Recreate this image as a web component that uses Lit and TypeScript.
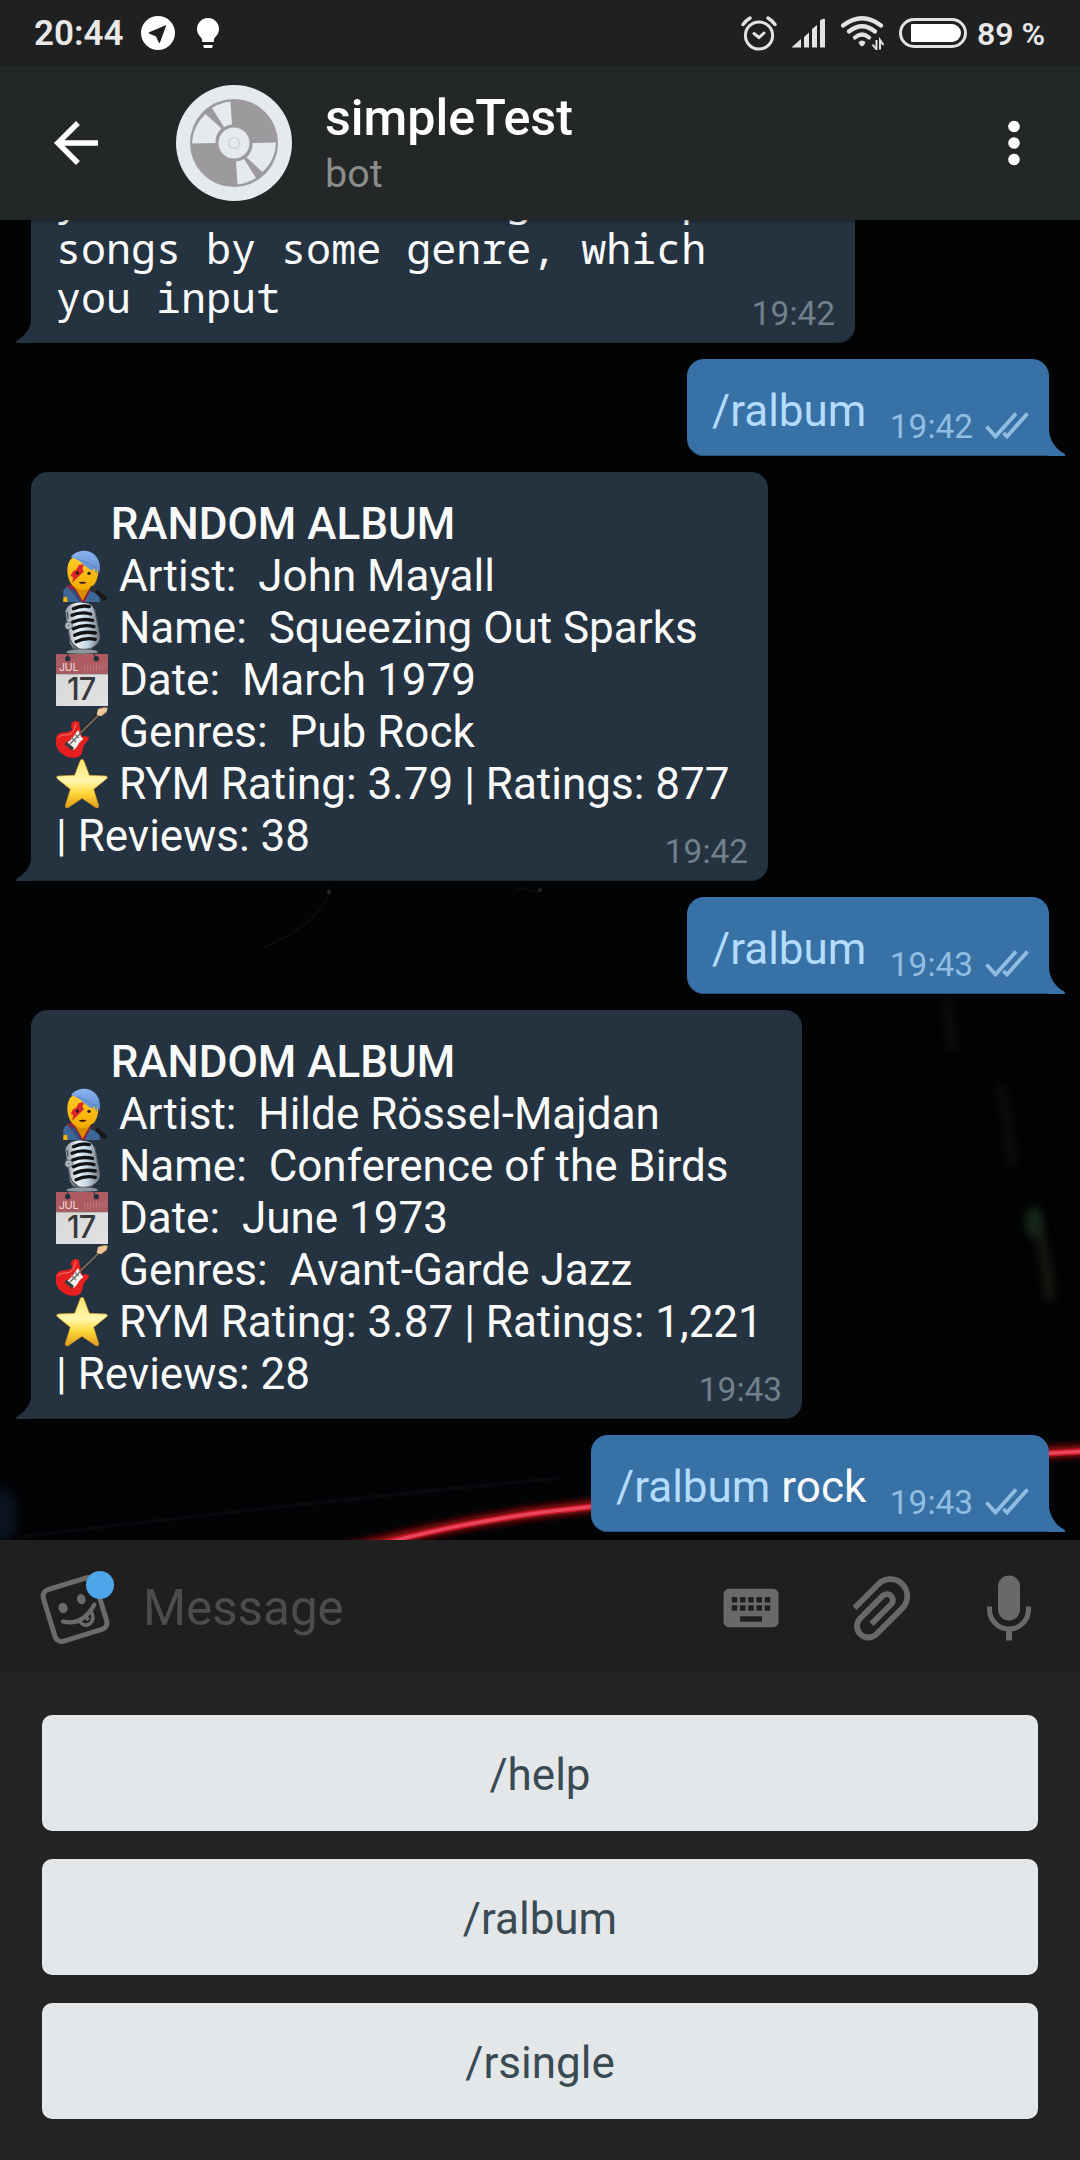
import { LitElement, html, css, svg, nothing } from "lit";
import { customElement, property } from "lit/decorators.js";

type Line = { icon?: string; text: string; bold?: boolean };
type Message = {
  out?: boolean;
  mono?: boolean;
  width: number;
  time: string;
  lines?: Line[];
  command?: string;
  rest?: string;
};

const album = (artist: string, name: string, date: string, genres: string, rating: string, reviews: string): Line[] => [
  { text: "     RANDOM ALBUM", bold: true },
  { icon: "singer", text: ` Artist:  ${artist}` },
  { icon: "mic", text: ` Name:  ${name}` },
  { icon: "calendar", text: ` Date:  ${date}` },
  { icon: "guitar", text: ` Genres:  ${genres}` },
  { icon: "star", text: ` RYM Rating: ${rating}` },
  { text: `| Reviews: ${reviews}` },
];

const MESSAGES: Message[] = [
  {
    mono: true,
    width: 824,
    time: "19:42",
    lines: [
      { text: "y" + " ".repeat(17) + "g" + " ".repeat(6) + "p" },
      { text: "songs by some genre, which" },
      { text: "you input" },
    ],
  },
  { out: true, width: 362, time: "19:42", command: "/ralbum" },
  {
    width: 737,
    time: "19:42",
    lines: album("John Mayall", "Squeezing Out Sparks", "March 1979", "Pub Rock", "3.79 | Ratings: 877", "38"),
  },
  { out: true, width: 362, time: "19:43", command: "/ralbum" },
  {
    width: 771,
    time: "19:43",
    lines: album("Hilde Rössel-Majdan", "Conference of the Birds", "June 1973", "Avant-Garde Jazz", "3.87 | Ratings: 1,221", "28"),
  },
  { out: true, width: 458, time: "19:43", command: "/ralbum", rest: " rock" },
];

const EMOJI: Record<string, unknown> = {
  singer: svg`
    <defs>
      <linearGradient id="skin" x1="0" y1="0" x2="0" y2="1"><stop offset="0" stop-color="#ffcf2a"/><stop offset="1" stop-color="#f3aa00"/></linearGradient>
      <linearGradient id="hair" x1="0" y1="0" x2="0" y2="1"><stop offset="0" stop-color="#8bb4ee"/><stop offset="1" stop-color="#5b86cc"/></linearGradient>
    </defs>
    <path d="M22 156 V124 C28 108 42 104 54 104 H104 C120 108 130 120 132 156 Z" fill="#3d6799"/>
    <path d="M22 142 L33 140 L35 156 H22 Z" fill="#f4b400"/>
    <path d="M32 108 L56 100 L106 104 L100 128 L86 156 H72 Z" fill="#8f2438"/>
    <path d="M40 112 L58 122 L76 156 H68 Z" fill="#2d5181"/>
    <path d="M56 112 L102 112 L80 152 Z" fill="#d98c00"/>
    <path d="M34 62 C34 24 56 14 82 14 C112 14 127 32 127 62 C127 98 106 120 81 120 C56 120 34 98 34 62 Z" fill="url(#skin)"/>
    <path d="M68 46 L84 42 L79 56 L84 64 L48 98 L52 82 L44 78 L51 64 L60 60 Z" fill="#d9252c"/>
    <path d="M45 21 C58 2 94 -6 116 14 C132 30 134 48 130 70 L125 56 L121 72 L114 54 L109 62 C98 56 84 46 74 36 C66 29 54 25 45 21 Z" fill="url(#hair)"/>
    <path d="M62 26 C84 34 104 42 121 55" stroke="#4c78c2" stroke-width="2" fill="none"/>
    <circle cx="64" cy="69" r="5" fill="#2c1a14"/><circle cx="99" cy="70" r="5" fill="#2c1a14"/>
    <path d="M68 97 C74 95 86 95 91 97 C86 103 74 103 68 97 Z" fill="#3a1712"/>
    <path d="M112 124 L120 116 L154 143 L151 151 L143 152 Z" fill="#17181a"/>
    <circle cx="112" cy="117" r="10" fill="#303134"/>`,
  mic: svg`
    <defs>
      <linearGradient id="steel" x1="0" y1="0" x2="1" y2="0"><stop offset="0" stop-color="#8c9298"/><stop offset=".35" stop-color="#eef3f7"/><stop offset=".65" stop-color="#bfd3e2"/><stop offset="1" stop-color="#6d7277"/></linearGradient>
    </defs>
    <path d="M36 146 Q80 138 122 146 L126 152 Q80 158 31 153 Z" fill="#8e979c"/>
    <path d="M40 120 L50 140 H108 L122 118 Z" fill="#6c7378"/>
    <path d="M28 28 C34 4 64 0 80 2 C104 2 114 14 118 34 L132 104 C132 128 106 140 84 140 C58 140 42 130 40 112 Z" fill="url(#steel)"/>
    <path d="M52 20 Q78 8 100 14 M48 40 Q74 28 104 36 M50 60 Q78 48 110 55 M52 80 Q82 66 114 74 M56 100 Q84 86 118 93 M60 119 Q88 106 118 112" stroke="#111315" stroke-width="10" stroke-linecap="round" fill="none"/>
    <path d="M34 30 L36 50 M34 68 L42 112 Q48 130 66 138" stroke="#4c5257" stroke-width="4" fill="none"/>
    <circle cx="38" cy="71" r="11" fill="#b9c3ca" stroke="#5d666c" stroke-width="3"/>
    <circle cx="38" cy="71" r="4" fill="#7c868c"/>
    <path d="M116 22 L131 100" stroke="#5b6267" stroke-width="4" stroke-dasharray="9 9"/>`,
  calendar: svg`
    <defs><linearGradient id="page" x1="0" y1="0" x2="1" y2="1"><stop offset="0" stop-color="#d6d6d6"/><stop offset="1" stop-color="#e2e2e2"/></linearGradient></defs>
    <rect width="156" height="156" fill="url(#page)"/>
    <rect width="156" height="60" fill="#ad5b60"/>
    <rect y="58" width="156" height="3" fill="#8e6c70"/>
    <circle cx="35" cy="14" r="8" fill="#22303d"/><circle cx="121" cy="14" r="8" fill="#22303d"/>
    <path d="M35 0 V10 M113 0 L119 10" stroke="#22303d" stroke-width="3"/>
    <path d="M86 34 V50 M95 30 V50 M104 34 V50 M113 30 V50 M122 28 V50 M131 32 V50 M140 28 V46 M148 24 V44" stroke="#c98287" stroke-width="3" stroke-dasharray="4 2"/>
    <text x="8" y="52" font-family="Inter, sans-serif" font-size="33" fill="#ecd8da" textLength="60">JUL</text>
    <text x="33" y="139" font-family="Inter, sans-serif" font-size="92" font-weight="500" fill="#37393b" textLength="88">17</text>`,
  guitar: svg`
    <path d="M60 94 L134 22" stroke="#24221f" stroke-width="13"/>
    <path d="M60 94 L134 22" stroke="#5d5853" stroke-width="7"/>
    <path d="M64 88 L132 22" stroke="#8d867d" stroke-width="2"/>
    <path d="M122 26 L126 9 L148 3 L155 6 L152 17 L134 31 Z" fill="#edc79a"/>
    <path d="M128 8 L151 4 M137 30 L153 17" stroke="#a47c52" stroke-width="2.500"/>
    <path d="M47 66 C41 54 50 43 62 45 C73 47 69 58 72 67 C75 77 72 84 80 92 C88 90 92 92 99 92 C97 108 86 110 82 122 C78 136 80 146 66 153 C48 160 28 152 14 140 C-3 126 -6 96 6 85 C18 76 32 82 41 76 C48 72 50 72 47 66 Z" fill="#e71f1f"/>
    <path d="M6 96 C10 87 24 88 40 85 C54 81 56 64 60 52" stroke="#ff7d78" stroke-width="3" fill="none"/>
    <path d="M66 72 C74 84 72 92 80 96 C84 99 80 102 76 104 C68 108 66 124 52 132 L30 114 C40 104 50 98 56 86 Z" fill="#efefed"/>
    <path d="M46 94 L60 108 M56 84 L68 96" stroke="#8b8b8b" stroke-width="5"/>
    <path d="M30 106 L54 126 L48 134 L26 116 Z" fill="#3c3c3e"/>
    <path d="M42 114 L74 82" stroke="#6f6963" stroke-width="4"/>`,
  star: svg`
    <defs>
      <linearGradient id="gold" x1="0" y1="0" x2="0" y2="1"><stop offset="0" stop-color="#ffe36a"/><stop offset=".45" stop-color="#fff7ae"/><stop offset=".7" stop-color="#ffd83a"/><stop offset="1" stop-color="#e29a1a"/></linearGradient>
    </defs>
    <path d="M73 7 Q78 0 83 7 L100 52 L150 54 Q158 57 152 62 L113 94 L128 143 Q128 152 120 149 L78 121 L36 149 Q28 152 28 143 L43 94 L4 62 Q-2 57 6 54 L56 52 Z" fill="url(#gold)" stroke="#dc9d26" stroke-width="2"/>`,
};

@customElement("emoji-icon")
class EmojiIcon extends LitElement {
  @property() name = "";
  static styles = css`
    :host { display: inline-block; width: 52px; height: 52px; vertical-align: -11px; }
    svg { display: block; width: 52px; height: 52px; }
  `;
  render() {
    return html`<svg viewBox="0 0 156 156">${EMOJI[this.name]}</svg>`;
  }
}

@customElement("chat-bubble")
class ChatBubble extends LitElement {
  @property({ attribute: false }) message!: Message;
  static styles = css`
    :host { display: flex; padding: 0 31px; flex: none; }
    .bubble {
      position: relative;
      display: grid;
      box-sizing: border-box;
      padding: 26px 19px 19px 25px;
      border-radius: 17px 17px 17px 0;
      background: #253341;
      box-shadow: inset 0 -1px #1a2733;
      color: #fafafa;
      font-size: 44px;
      line-height: 52px;
      white-space: pre;
    }
    .bubble.out {
      margin-left: auto;
      background: #3871a5;
      box-shadow: inset 0 -1px #28537b;
      border-radius: 17px 17px 0 17px;
    }
    .bubble.mono .body {
      margin-bottom: 3px;
      font-family: "Noto Sans Mono", "DejaVu Sans Mono", monospace;
      font-size: 41.700px;
      line-height: 49px;
    }
    .body, .meta { grid-area: 1 / 1; }
    .line { height: 52px; }
    .mono .line { height: 49px; }
    .line.bold { font-weight: 500; }
    .meta {
      justify-self: end;
      align-self: end;
      display: flex;
      align-items: flex-start;
      gap: 12px;
      margin-bottom: -9px;
      margin-right: 1px;
      font-size: 33.400px;
      line-height: 39px;
      color: #71808d;
    }
    .out .meta { color: #92bde3; margin-right: 1px; }
    .checks { width: 44px; height: 27px; margin-top: 5px; }
    .tail { position: absolute; bottom: 0; left: -15.500px; width: 16px; height: 26px; fill: #253341; }
    .out .tail { left: auto; right: -15.500px; fill: #3871a5; transform: scaleX(-1); }
    .command { color: #b3dcff; }
  `;
  render() {
    const m = this.message;
    return html`<div class="bubble ${m.out ? "out" : ""} ${m.mono ? "mono" : ""}" style="width:${m.width}px"
      ><svg class="tail" viewBox="0 0 16 26"><path d="M16 0 C15.500 10 9 19.500 1.500 23 Q0 23.800 0 25 V26 H16 Z"/></svg
      ><div class="body">${m.lines
        ? m.lines.map(
            (l) => html`<div class="line ${l.bold ? "bold" : ""}">${l.icon ? html`<emoji-icon name=${l.icon}></emoji-icon>` : nothing}${l.text}</div>`,
          )
        : html`<span class="command">${m.command}</span>${m.rest ?? nothing}`}</div
      ><div class="meta"><span>${m.time}</span>${m.out
        ? html`<svg class="checks" viewBox="0 0 44 27" fill="none" stroke="#92bde3" stroke-width="3.800"><path d="M1.500 14.500 L10.500 24.500 L31 1.500 M18.500 21 L22 24.500 L42.500 1.500"/></svg>`
        : nothing}</div
    ></div>`;
  }
}

@customElement("app-root")
class AppRoot extends LitElement {
  static styles = css`
    :host {
      display: flex;
      flex-direction: column;
      width: 1080px;
      height: 2160px;
      overflow: hidden;
      background: #242424;
      font-family: Roboto, "Noto Sans", sans-serif;
    }
    .status, .header, .chat, .composer { flex: none; }
    .status {
      display: flex;
      align-items: center;
      justify-content: space-between;
      height: 66px;
      padding: 0 35px 0 34px;
      box-sizing: border-box;
      background: #1f2022;
      color: #e8e8e8;
      font-weight: 600;
      line-height: 40px;
    }
    .status-side { display: flex; align-items: center; }
    .status-side svg { display: block; }
    .i-plane { margin-left: 17px; }
    .i-bulb { margin-left: 22px; }
    .i-signal { margin-left: 15px; }
    .i-wifi { margin-left: 15px; }
    .i-battery { margin: 0 10px 0 15px; }
    .clock { margin-top: 2px; font-size: 35px; }
    .charge { margin-top: 2px; font-size: 32px; white-space: pre; }
    .header {
      display: flex;
      align-items: center;
      height: 154px;
      box-sizing: border-box;
      padding: 0 33px 0 43px;
      background: #242728;
      z-index: 1;
      box-shadow: 0 1px 4px rgba(0, 0, 0, 0.4);
    }
    .avatar { margin-left: 67px; }
    .titles { flex: 1; margin-left: 33px; }
    .title { color: #fff; font-size: 50.200px; font-weight: 500; line-height: 58px; }
    .subtitle { color: #8b8d8d; font-size: 39.500px; line-height: 46px; margin-top: 4px; }
    .chat {
      position: relative;
      display: flex;
      flex-direction: column;
      justify-content: flex-end;
      gap: 16px;
      height: 1320px;
      box-sizing: border-box;
      padding-bottom: 8px;
      overflow: hidden;
      background: #020305;
    }
    .wallpaper { position: absolute; inset: 0; }
    .composer {
      display: flex;
      align-items: center;
      height: 133px;
      box-sizing: border-box;
      padding: 2px 38px 0 38px;
      background: #1f1f1f;
    }
    .placeholder { flex: 1; margin-left: 29px; color: #4c4c4c; font-size: 49.300px; line-height: 58px; }
    .i-clip { margin-left: 65px; }
    .i-mic { margin-left: 61px; }
    .keyboard { display: flex; flex-direction: column; gap: 28px; padding: 42px 42px 41px; }
    .key {
      flex: none;
      height: 116px;
      border: 0;
      border-radius: 10px;
      padding: 3px 0 0;
      background: #e3e7ea;
      color: #3a4a53;
      font: 44px/52px Roboto, sans-serif;
    }
  `;

  private wallpaper() {
    return svg`
      <defs>
        <filter id="soft" x="-20%" y="-20%" width="140%" height="140%"><feGaussianBlur stdDeviation="3"/></filter>
        <filter id="wide" filterUnits="userSpaceOnUse" x="-60" y="0" width="1200" height="1400" color-interpolation-filters="sRGB"><feGaussianBlur stdDeviation="5"/></filter>
      </defs>
      <ellipse cx="2" cy="1296" rx="14" ry="28" fill="#0a1320" filter="url(#wide)"/>
      <path d="M20 1317 Q280 1285 560 1258" stroke="#08090c" stroke-width="4" fill="none"/>
      <path d="M948 780 L952 830 M1000 865 Q1010 900 1011 945" stroke="#11130f" stroke-width="6" fill="none" filter="url(#wide)"/>
      <path d="M1032 995 Q1045 1020 1050 1080" stroke="#1c2014" stroke-width="8" fill="none" filter="url(#wide)"/>
      <ellipse cx="1034" cy="1002" rx="8" ry="16" fill="#16281a" filter="url(#wide)"/>
      <path d="M330 665 Q328 700 262 728 M515 668 L540 672" stroke="#0b0c0f" stroke-width="2" fill="none"/>
      <circle cx="329" cy="672" r="2" fill="#26282b"/><circle cx="540" cy="670" r="2" fill="#26282b"/>
      <g fill="none">
        <path d="M325 1333 C390 1322 430 1307 540 1292 C720 1272 900 1240 1090 1230" stroke="#8d0810" stroke-width="12" filter="url(#soft)"/>
        <path d="M335 1333 C395 1322 430 1308 540 1292.500 C720 1273 900 1240 1090 1231" stroke="#c01526" stroke-width="6.500"/>
        <path d="M345 1332 C395 1322 430 1308 540 1292.500 C720 1273 900 1240 1090 1231" stroke="#e8455a" stroke-width="3.500"/>
      </g>`;
  }

  render() {
    return html`
      <div class="status">
        <div class="status-side">
          <span class="clock">20:44</span>
          <svg class="i-plane" width="34" height="34" viewBox="0 0 34 34">
            <circle cx="17" cy="17" r="17" fill="#fff"/>
            <path d="M25 10 L19 26.500 Q18.300 27.500 17.600 26.200 L15 20.500 L8 17.500 Q7 16.800 8.200 16.200 L24 9.500 Q25.300 9 25 10 Z" fill="#1f2022"/>
          </svg>
          <svg class="i-bulb" width="22" height="31" viewBox="0 0 22 31" fill="#fff">
            <path d="M11 0 A11 11 0 0 1 22 11 C22 16 18.500 18.500 17 21 V23 Q17 24 16 24 H6 Q5 24 5 23 V21 C3.500 18.500 0 16 0 11 A11 11 0 0 1 11 0 Z"/>
            <path d="M6.500 27 H15.500 V29 Q15.500 30 14.500 30 H7.500 Q6.500 30 6.500 29 Z"/>
          </svg>
        </div>
        <div class="status-side">
          <svg width="36" height="35" viewBox="0 0 36 35" fill="none" stroke="#e3e3e3" stroke-width="3" stroke-linecap="round">
            <circle cx="18" cy="19.500" r="13.600"/>
            <path d="M13 17.500 L18 21.500 L23 17" stroke-width="3"/>
            <path d="M2 8.500 Q5 4.500 9 2 M34 8.500 Q31 4.500 27 2" stroke-width="3.400"/>
          </svg>
          <svg class="i-signal" width="34" height="30" viewBox="0 0 34 30" fill="#e3e3e3">
            <path d="M0 29 L9 21 V29.500 H0 Z M12 19 L17 14.500 V29.500 H12 Z M20 11 L25 7 V29.500 H20 Z M28 2.500 Q31 0 33 1 V29.500 H28 Z"/>
          </svg>
          <svg class="i-wifi" width="43" height="34" viewBox="0 0 43 34" fill="none" stroke="#e3e3e3" stroke-width="4.200" stroke-linecap="round">
            <path d="M2 9.500 Q21 -5 40 9.500 M8 15.500 Q21 5 34 15.500 M14 21.500 Q21 15.500 28 21.500"/>
            <path d="M17.500 26 Q21 23 24.500 26 Q24 29 21 30.500 Q18 29 17.500 26 Z" fill="#e3e3e3" stroke="none"/>
            <path d="M35.500 24 V33.500 L31.500 28.500 M39 33.500 V24 L42.500 29" stroke-width="2" stroke-linecap="butt"/>
          </svg>
          <svg class="i-battery" width="68" height="30" viewBox="0 0 68 30">
            <rect x="1.500" y="1.500" width="65" height="27" rx="13.500" fill="none" stroke="#e3e3e3" stroke-width="3"/>
            <path d="M13 6 H53 A9 9 0 0 1 53 24 H13 Q12 24 12 23 V7 Q12 6 13 6 Z" fill="#fff"/>
          </svg>
          <span class="charge">89 %</span>
        </div>
      </div>

      <div class="header">
        <svg width="66" height="66" viewBox="0 0 24 24" fill="#fff"><path d="M20 11H7.830l5.590-5.590L12 4l-8 8 8 8 1.410-1.410L7.830 13H20v-2z"/></svg>
        <svg class="avatar" width="116" height="116" viewBox="-58 -58 116 116">
          <circle r="58" fill="#e5eaef"/>
          <circle r="44" fill="#9c9a9d"/>
          <g fill="#e5eaef">
            <path d="M-42 0.500 A42 42 0 0 1 -28.500 -29 L-12.500 -14.500 A18.500 18.500 0 0 0 -18.500 0 Z"/>
            <path d="M-22 -35 A42 42 0 0 1 -3.500 -41.500 L-2 -18.500 A18.500 18.500 0 0 0 -10 -16 Z"/>
            <path d="M42 -0.500 A42 42 0 0 1 28.500 29 L12.500 14.500 A18.500 18.500 0 0 0 18.500 0 Z"/>
            <path d="M22 35 A42 42 0 0 1 3.500 41.500 L2 18.500 A18.500 18.500 0 0 0 10 16 Z"/>
            <circle r="15.500"/>
          </g>
          <circle r="5.500" fill="none" stroke="#c9ccd0" stroke-width="1.200"/>
        </svg>
        <div class="titles">
          <div class="title">simpleTest</div>
          <div class="subtitle">bot</div>
        </div>
        <svg width="66" height="66" viewBox="-33 -33 66 66" fill="#fff"><circle cy="-16.500" r="5.800"/><circle r="5.800"/><circle cy="16.500" r="5.800"/></svg>
      </div>

      <div class="chat">
        <svg class="wallpaper" width="1080" height="1320" viewBox="0 0 1080 1320">${this.wallpaper()}</svg>
        ${MESSAGES.map((m) => html`<chat-bubble .message=${m}></chat-bubble>`)}
      </div>

      <div class="composer">
        <svg width="76" height="76" viewBox="0 0 76 76" fill="none" stroke="#6b6b6b" stroke-width="5">
          <g transform="translate(37 39.500) rotate(-17)">
            <rect x="-27" y="-27" width="54" height="54" rx="7"/>
            <ellipse cx="-11" cy="-5" rx="4.600" ry="5.200" fill="#6b6b6b" stroke="none"/>
            <ellipse cx="9" cy="-8" rx="4.200" ry="5.200" fill="#6b6b6b" stroke="none"/>
            <path d="M-15 8 Q2 18 20 1" stroke-width="4.200" stroke-linecap="round"/>
            <path d="M1 13 Q4 20 10 18 Q16.500 15 15 7 M8 10 L10 14" stroke-width="3.600"/>
          </g>
          <circle cx="62" cy="15" r="14" fill="#4da6ea" stroke="none"/>
        </svg>
        <div class="placeholder">Message</div>
        <svg width="66" height="66" viewBox="0 0 24 24" fill="#696969"><path d="M20 5H4c-1.100 0-1.990.9-1.990 2L2 17c0 1.100.9 2 2 2h16c1.100 0 2-.9 2-2V7c0-1.100-.9-2-2-2zm-9 3h2v2h-2V8zm0 3h2v2h-2v-2zM8 8h2v2H8V8zm0 3h2v2H8v-2zm-1 2H5v-2h2v2zm0-3H5V8h2v2zm9 7H8v-2h8v2zm0-4h-2v-2h2v2zm0-3h-2V8h2v2zm3 3h-2v-2h2v2zm0-3h-2V8h2v2z"/></svg>
        <svg class="i-clip" width="66" height="66" viewBox="849 1574.500 66 66" fill="none" stroke="#696969" stroke-width="5.800">
          <path d="M854.500 1607.500 L879 1583 A17 17 0 0 1 903 1607 L876.300 1633.700 A11.300 11.300 0 0 1 860.300 1617.700 L883.300 1594.800 A6 6 0 0 1 891.700 1603.200 L871.500 1623.400"/>
        </svg>
        <svg class="i-mic" width="66" height="66" viewBox="976 1574.500 66 66" fill="none" stroke="#696969">
          <rect x="998" y="1575" width="22" height="45" rx="11" fill="#696969" stroke="none"/>
          <path d="M989.500 1606 V1609 A19.500 19.500 0 0 0 1028.500 1609 V1606" stroke-width="5"/>
          <path d="M1009 1629 V1640" stroke-width="6"/>
        </svg>
      </div>

      <div class="keyboard">
        ${["/help", "/ralbum", "/rsingle"].map((k) => html`<button class="key">${k}</button>`)}
      </div>
    `;
  }
}
